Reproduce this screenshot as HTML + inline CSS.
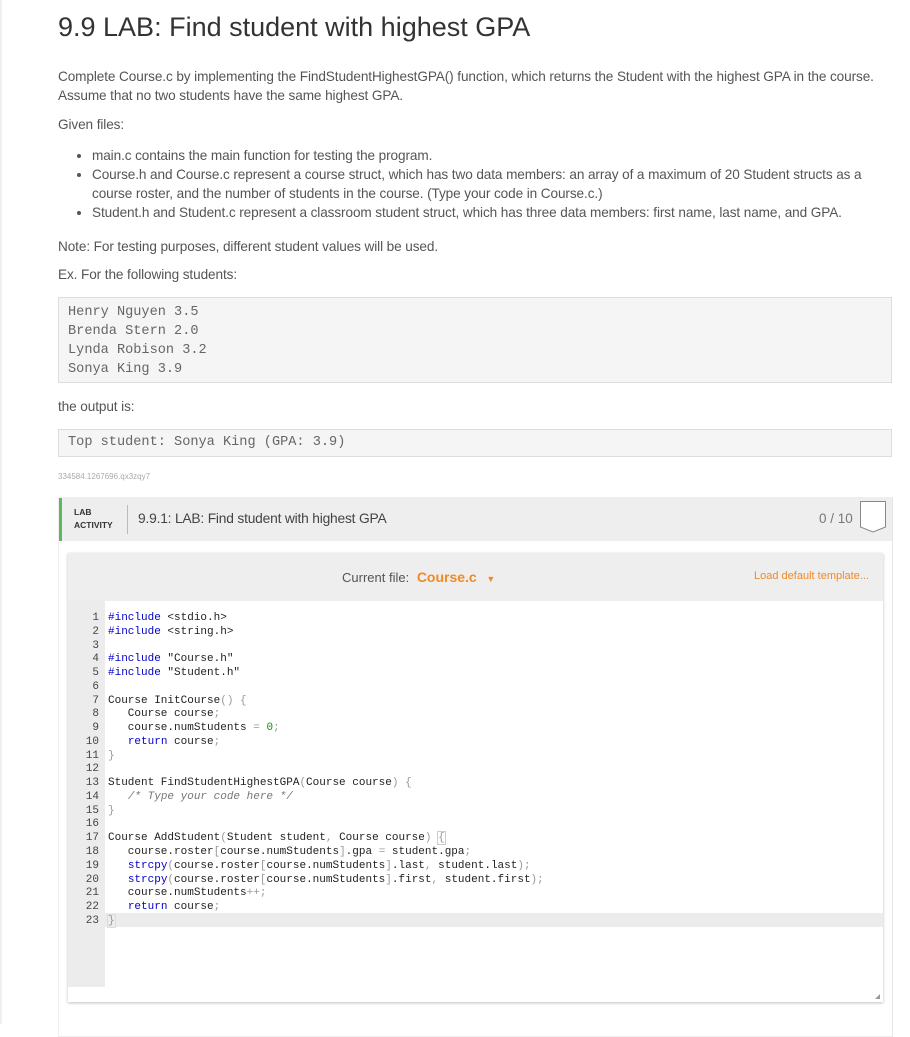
<!DOCTYPE html>
<html><head><meta charset="utf-8">
<style>
*{margin:0;padding:0;box-sizing:border-box}
body{width:910px;height:1024px;overflow:hidden;background:#fff;font-family:"Liberation Sans",sans-serif;color:#444;position:relative}
.edge{position:absolute;left:0;top:0;width:2px;height:1024px;background:#f0f0f0}
h1{position:absolute;left:58px;top:12px;font-weight:normal;font-size:27px;color:#333}
.p{position:absolute;left:58px;font-size:13.6px;color:#555;line-height:19px;white-space:nowrap;letter-spacing:-0.1px}
ul{position:absolute;left:74px;top:146px;font-size:13.6px;color:#555;line-height:19px;width:840px;padding-left:18px;white-space:nowrap;letter-spacing:-0.1px}
pre{position:absolute;left:58px;width:834px;background:#f5f5f5;border:1px solid #ddd;font-family:"Liberation Mono",monospace;font-size:13.6px;color:#666;padding:0 9px}
.id{position:absolute;left:58px;top:472px;font-size:8px;color:#aaa}
.lab{position:absolute;left:58px;top:497px;width:835px;height:540px;border:1px solid #eee;border-right:1px solid #e6e6e6}
.lh{position:absolute;left:0;top:0;width:833px;height:43px;background:#eee;border-left:3px solid #5cb85c}
.lt{position:absolute;left:12px;top:8px;font-size:8.5px;font-weight:bold;color:#333;line-height:13px}
.sep{position:absolute;left:65px;top:7px;width:1px;height:29px;background:#bbb}
.ttl{position:absolute;left:76px;top:13px;font-size:13.8px;color:#444;letter-spacing:-0.2px}
.sc{position:absolute;left:757px;top:13px;font-size:13.5px;color:#777}
.ed{position:absolute;left:68px;top:553px;width:815px;height:449px;background:#fff;box-shadow:0 1px 3px rgba(0,0,0,.25)}
.eh{position:absolute;left:0;top:0;width:815px;height:48px;background:#eee}
.cf{position:absolute;left:274px;top:16px;font-size:13px;color:#555}
.cf b{font-weight:bold;color:#f08a24;font-size:14px;margin-left:4px}
.ld{position:absolute;right:14px;top:17px;font-size:11px;color:#f08a24}
.gut{position:absolute;left:0;top:48px;width:37px;height:386px;background:#ececec}
.hl{position:absolute;left:0;top:360px;width:815px;height:14px;background:#ececec}
.code{position:absolute;left:0;top:59px;font-family:"Liberation Mono",monospace;font-size:11px;line-height:13.77px;color:#222;white-space:pre}
.n{display:inline-block;width:31px;text-align:right;color:#444;margin-right:9px}
.k{color:#00c}.g{color:#999}.c{color:#777;font-style:italic}.num{color:#090}
</style></head><body>
<div class="edge"></div>
<h1>9.9 LAB: Find student with highest GPA</h1>
<div class="p" style="top:67px;width:830px">Complete Course.c by implementing the FindStudentHighestGPA() function, which returns the Student with the highest GPA in the course.<br>Assume that no two students have the same highest GPA.</div>
<div class="p" style="top:115px">Given files:</div>
<ul>
<li>main.c contains the main function for testing the program.</li>
<li>Course.h and Course.c represent a course struct, which has two data members: an array of a maximum of 20 Student structs as a<br>course roster, and the number of students in the course. (Type your code in Course.c.)</li>
<li>Student.h and Student.c represent a classroom student struct, which has three data members: first name, last name, and GPA.</li>
</ul>
<div class="p" style="top:237px">Note: For testing purposes, different student values will be used.</div>
<div class="p" style="top:265px">Ex. For the following students:</div>
<pre style="top:297px;height:86px;padding-top:5px;line-height:19px">Henry Nguyen 3.5
Brenda Stern 2.0
Lynda Robison 3.2
Sonya King 3.9</pre>
<div class="p" style="top:397px">the output is:</div>
<pre style="top:429px;height:28px;line-height:26px">Top student: Sonya King (GPA: 3.9)</pre>
<div class="id">334584.1267696.qx3zqy7</div>
<div class="lab">
 <div class="lh">
  <div class="lt">LAB<br>ACTIVITY</div>
  <div class="sep"></div>
  <div class="ttl">9.9.1: LAB: Find student with highest GPA</div>
  <div class="sc">0 / 10</div>
  <svg style="position:absolute;left:796px;top:2px" width="30" height="36"><path d="M2.5 1.5H27.5V27L15 32L2.5 27Z" fill="#fff" stroke="#888" stroke-width="1"/></svg>
 </div>
</div>
<div class="ed">
 <div class="eh"><div class="cf">Current file: <b>Course.c</b> <span style="color:#f08a24;font-size:9px;margin-left:6px">▼</span></div><div class="ld">Load default template...</div></div>
 <div class="gut"></div>
 <div class="hl"></div>
<div class="code"><span class="n">1</span><span class="k">#include</span> &lt;stdio.h&gt;
<span class="n">2</span><span class="k">#include</span> &lt;string.h&gt;
<span class="n">3</span>
<span class="n">4</span><span class="k">#include</span> "Course.h"
<span class="n">5</span><span class="k">#include</span> "Student.h"
<span class="n">6</span>
<span class="n">7</span>Course InitCourse<span class="g">()</span> <span class="g">{</span>
<span class="n">8</span>   Course course<span class="g">;</span>
<span class="n">9</span>   course.numStudents <span class="g">=</span> <span class="num">0</span><span class="g">;</span>
<span class="n">10</span>   <span class="k">return</span> course<span class="g">;</span>
<span class="n">11</span><span class="g">}</span>
<span class="n">12</span>
<span class="n">13</span>Student FindStudentHighestGPA<span class="g">(</span>Course course<span class="g">)</span> <span class="g">{</span>
<span class="n">14</span>   <span class="c">/* Type your code here */</span>
<span class="n">15</span><span class="g">}</span>
<span class="n">16</span>
<span class="n">17</span>Course AddStudent<span class="g">(</span>Student student<span class="g">,</span> Course course<span class="g">)</span> <span class="g" style="outline:1px solid #ccc">{</span>
<span class="n">18</span>   course.roster<span class="g">[</span>course.numStudents<span class="g">]</span>.gpa <span class="g">=</span> student.gpa<span class="g">;</span>
<span class="n">19</span>   <span class="k">strcpy</span><span class="g">(</span>course.roster<span class="g">[</span>course.numStudents<span class="g">]</span>.last<span class="g">,</span> student.last<span class="g">);</span>
<span class="n">20</span>   <span class="k">strcpy</span><span class="g">(</span>course.roster<span class="g">[</span>course.numStudents<span class="g">]</span>.first<span class="g">,</span> student.first<span class="g">);</span>
<span class="n">21</span>   course.numStudents<span class="g">++;</span>
<span class="n">22</span>   <span class="k">return</span> course<span class="g">;</span>
<span class="n">23</span><span class="g" style="outline:1px solid #ddd">}</span></div>
 <div style="position:absolute;right:3px;bottom:3px;width:0;height:0;border-left:5px solid transparent;border-bottom:5px solid #999"></div>
</div>
</body></html>
